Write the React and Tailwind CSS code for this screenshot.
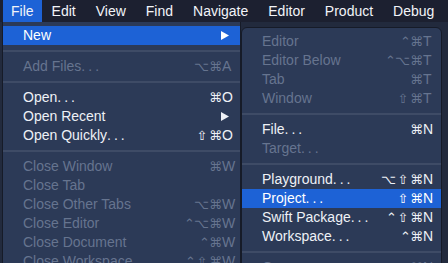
import React from 'react';

const MOD_W = { '⌃': 'w-[10px]', '⌥': 'w-[15px]', '⇧': 'w-[14px]', '⌘': 'w-[12px]' };

const MAIN = [
  { label: 'New', sub: true, active: true },
  { sep: true },
  { label: 'Add Files...', mods: ['⌥', '⌘'], key: 'A', disabled: true },
  { sep: true },
  { label: 'Open...', mods: ['⌘'], key: 'O' },
  { label: 'Open Recent', sub: true },
  { label: 'Open Quickly...', mods: ['⇧', '⌘'], key: 'O' },
  { sep: true },
  { label: 'Close Window', mods: ['⌘'], key: 'W', disabled: true },
  { label: 'Close Tab', disabled: true },
  { label: 'Close Other Tabs', mods: ['⌥', '⌘'], key: 'W', disabled: true },
  { label: 'Close Editor', mods: ['⌃', '⌥', '⌘'], key: 'W', disabled: true },
  { label: 'Close Document', mods: ['⌃', '⌘'], key: 'W', disabled: true },
  { label: 'Close Workspace', mods: ['⌃', '⇧', '⌘'], key: 'W', disabled: true },
];

const NEW_SUB = [
  { label: 'Editor', mods: ['⌃', '⌘'], key: 'T', disabled: true },
  { label: 'Editor Below', mods: ['⌃', '⌥', '⌘'], key: 'T', disabled: true },
  { label: 'Tab', mods: ['⌘'], key: 'T', disabled: true },
  { label: 'Window', mods: ['⇧', '⌘'], key: 'T', disabled: true },
  { sep: true },
  { label: 'File...', mods: ['⌘'], key: 'N' },
  { label: 'Target...', disabled: true },
  { sep: true },
  { label: 'Playground...', mods: ['⌥', '⇧', '⌘'], key: 'N' },
  { label: 'Project...', mods: ['⇧', '⌘'], key: 'N', active: true },
  { label: 'Swift Package...', mods: ['⌃', '⇧', '⌘'], key: 'N' },
  { label: 'Workspace...', mods: ['⌃', '⌘'], key: 'N' },
  { sep: true },
  { label: 'Group', mods: ['⌥', '⌘'], key: 'N', disabled: true },
];

const BAR = ['File', 'Edit', 'View', 'Find', 'Navigate', 'Editor', 'Product', 'Debug'];

function Label({ text }) {
  // macOS draws the ellipsis as widely spaced dots
  if (!text.endsWith('...')) return <span>{text}</span>;
  return (
    <span>
      {text.slice(0, -3)}
      <span className="tracking-[3px]">...</span>
    </span>
  );
}

function Row({ item, padL }) {
  if (item.sep) {
    return (
      <div className="h-[12px] flex items-center">
        <div className="h-[2px] w-full bg-[#3e4b66]" />
      </div>
    );
  }
  const color = item.disabled ? 'text-[#66748f]' : 'text-[#eef1f6]';
  return (
    <div className={`h-[19px] flex items-center ${padL} pr-[5px] ${item.active ? 'bg-[#1d62d6] text-white' : color}`}>
      <div className="flex-1 text-[14px] leading-[19px] whitespace-nowrap">
        <Label text={item.label} />
      </div>
      {item.sub && (
        <svg width="8" height="9" viewBox="0 0 8 9" className="mr-[6px]">
          <polygon points="0,0 8,4.5 0,9" fill="currentColor" />
        </svg>
      )}
      {item.key && (
        <div className="flex items-center leading-[19px]">
          {item.mods.map((m, i) => (
            <span key={i} className={`${MOD_W[m]} text-center text-[13px] font-['DejaVu_Sans',sans-serif]`}>{m}</span>
          ))}
          <span className="w-[14px] pl-[1px] text-[14px]">{item.key}</span>
        </div>
      )}
    </div>
  );
}

export default function App() {
  return (
    <div className="relative w-[448px] h-[263px] overflow-hidden bg-[#222a3d] font-['Liberation_Sans',Arial,sans-serif] antialiased">
      <div className="h-[22px] flex items-center bg-[#1c2030] pl-[3px] text-[14px] text-[#f2f4f8]">
        {BAR.map((b, i) => (
          <div key={b} className={`h-[22px] flex items-center ${i === 0 ? 'px-[8px] bg-[#1d62d6]' : 'px-[10px]'}`}>
            {b}
          </div>
        ))}
      </div>

      <div className="ml-[2px] w-[239px] h-[241px] border-x border-[#161b28] bg-[#2c3a57] pt-[4px]">
        {MAIN.map((m, i) => (
          <Row key={i} item={m} padL="pl-[20px]" />
        ))}
      </div>

      <div className="absolute left-[241px] top-[27px] w-[201px] h-[260px] rounded-[6px] border border-[#161b28] bg-[#2c3a57] pt-[4px] overflow-hidden">
        {NEW_SUB.map((m, i) => (
          <Row key={i} item={m} padL="pl-[20px]" />
        ))}
      </div>
    </div>
  );
}
